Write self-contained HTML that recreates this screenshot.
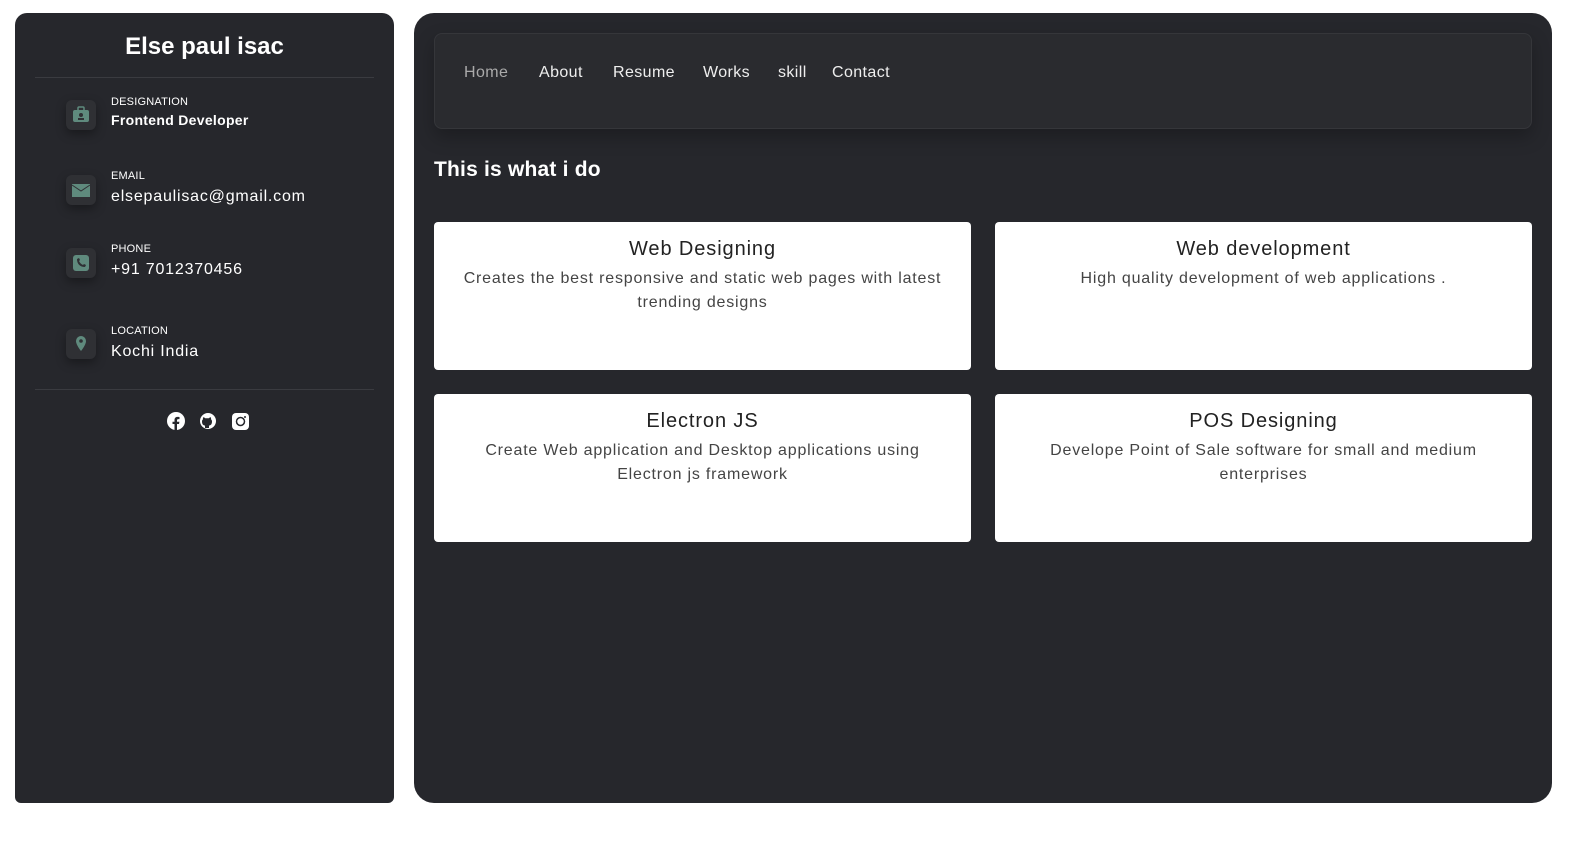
<!DOCTYPE html>
<html><head><style>
*{margin:0;padding:0;box-sizing:border-box}
body{width:1587px;height:841px;background:#fff;font-family:"Liberation Sans",sans-serif;position:relative;overflow:hidden;letter-spacing:0.5px}
.side{position:absolute;left:15px;top:13px;width:379px;height:790px;background:#26272c;border-radius:12px 12px 6px 6px}
.side h1{color:#fff;font-size:24px;font-weight:bold;text-align:center;margin-top:20px;letter-spacing:0}
.hr{position:absolute;left:20px;right:20px;height:1px;background:#3a3b40}
.item{position:absolute;left:51px}
.ic{position:absolute;left:0;width:30px;height:30px;border-radius:6px;background:#2f3034;box-shadow:0 4px 10px rgba(0,0,0,.35)}
.lbl{position:absolute;left:45px;color:#fff;font-size:11px;white-space:nowrap;letter-spacing:0.2px}
.val{position:absolute;left:45px;color:#fff;font-size:16px;white-space:nowrap;letter-spacing:0.8px}
.main{position:absolute;left:414px;top:13px;width:1138px;height:790px;background:#26272c;border-radius:20px}
.nav{position:absolute;left:20px;top:20px;width:1098px;height:96px;background:#2a2b2f;border:1px solid #35363a;border-radius:8px;box-shadow:0 8px 18px rgba(0,0,0,.25)}
.nav span{position:absolute;top:30px;color:#eee;font-size:16px;letter-spacing:0.4px}
h2{position:absolute;left:20px;top:145px;color:#fff;font-size:21px;font-weight:bold;letter-spacing:0.2px}
.card{position:absolute;width:537px;height:148px;background:#fff;border-radius:4px;text-align:center;color:#333}
.card b{display:block;font-weight:normal;font-size:20px;color:#222;margin-top:16px;letter-spacing:0.9px}
.card p{font-size:16px;line-height:24px;margin:6px 24px 0;color:#444;letter-spacing:0.8px}
</style></head><body>
<div class="side">
<h1>Else paul isac</h1>
<div class="hr" style="top:64px"></div>
<div class="item" style="top:87px">
<div class="ic"><svg width="30" height="30"><rect x="7" y="10" width="16" height="12" rx="2" fill="#5f8a7d"/><rect x="12" y="7" width="6" height="4" rx="1" fill="none" stroke="#5f8a7d" stroke-width="1.5"/><circle cx="15" cy="15" r="2" fill="#2f3034"/><rect x="12" y="18" width="6" height="2" fill="#2f3034"/></svg></div>
<div class="lbl" style="top:-4px">DESIGNATION</div><div class="val" style="top:12px;font-size:14px;font-weight:bold;letter-spacing:0.3px">Frontend Developer</div></div>
<div class="item" style="top:162px">
<div class="ic"><svg width="30" height="30"><rect x="6" y="9" width="18" height="13" fill="#5f8a7d"/><path d="M6 10 L15 16 L24 10" stroke="#2f3034" stroke-width="1" fill="none"/></svg></div>
<div class="lbl" style="top:-5px">EMAIL</div><div class="val" style="top:13px">elsepaulisac@gmail.com</div></div>
<div class="item" style="top:235px">
<div class="ic"><svg width="30" height="30"><rect x="7" y="7" width="16" height="16" rx="3" fill="#5f8a7d"/><path d="M11 11c0 5 3 8 8 8l1-2-2-1-1 1c-2-1-3-2-4-4l1-1-1-2z" fill="#2f3034"/></svg></div>
<div class="lbl" style="top:-5px">PHONE</div><div class="val" style="top:13px">+91 7012370456</div></div>
<div class="item" style="top:316px">
<div class="ic"><svg width="30" height="30"><path d="M15 7a5 5 0 0 0-5 5c0 4 5 10 5 10s5-6 5-10a5 5 0 0 0-5-5z" fill="#5f8a7d"/><circle cx="15" cy="12" r="1.8" fill="#2f3034"/></svg></div>
<div class="lbl" style="top:-4px">LOCATION</div><div class="val" style="top:14px">Kochi India</div></div>
<div class="hr" style="top:376px"></div>
<svg style="position:absolute;left:151px;top:399px" width="90" height="20">
<circle cx="10" cy="9" r="9" fill="#fff"/><path d="M11 18v-6h2l.4-2.3H11V8.3c0-.7.3-1.2 1.3-1.2h1.2V5c-.6-.1-1.3-.1-2-.1-2 0-3 1.200-3 3.1v1.7H6.5V12h2v6z" fill="#26272c"/>
<circle cx="42" cy="9" r="8" fill="#fff"/><path d="M39 16v-2.5c-1.5 0-3-1-3-4 0-1 .3-1.7 1-2.3-.1-.5-.1-1.3.2-2 1 0 1.8.7 2 1h3.6c.3-.3 1-1 2-1 .3.7.3 1.5.2 2 .7.6 1 1.3 1 2.3 0 3-1.5 4-3 4V16z" fill="#26272c"/>
<rect x="66" y="1" width="17" height="17" rx="4" fill="#fff"/><circle cx="74.5" cy="9.5" r="4" fill="none" stroke="#26272c" stroke-width="1.5"/><circle cx="79" cy="5" r="1" fill="#26272c"/>
</svg>
</div>
<div class="main">
<div class="nav">
<span style="left:29px;color:#aaa">Home</span><span style="left:104px">About</span><span style="left:178px">Resume</span><span style="left:268px">Works</span><span style="left:343px">skill</span><span style="left:397px">Contact</span>
</div>
<h2>This is what i do</h2>
<div class="card" style="left:20px;top:209px"><b>Web Designing</b><p>Creates the best responsive and static web pages with latest trending designs</p></div>
<div class="card" style="left:581px;top:209px"><b>Web development</b><p>High quality development of web applications .</p></div>
<div class="card" style="left:20px;top:381px"><b>Electron JS</b><p>Create Web application and Desktop applications using Electron js framework</p></div>
<div class="card" style="left:581px;top:381px"><b>POS Designing</b><p>Develope Point of Sale software for small and medium enterprises</p></div>
</div>
</body></html>
